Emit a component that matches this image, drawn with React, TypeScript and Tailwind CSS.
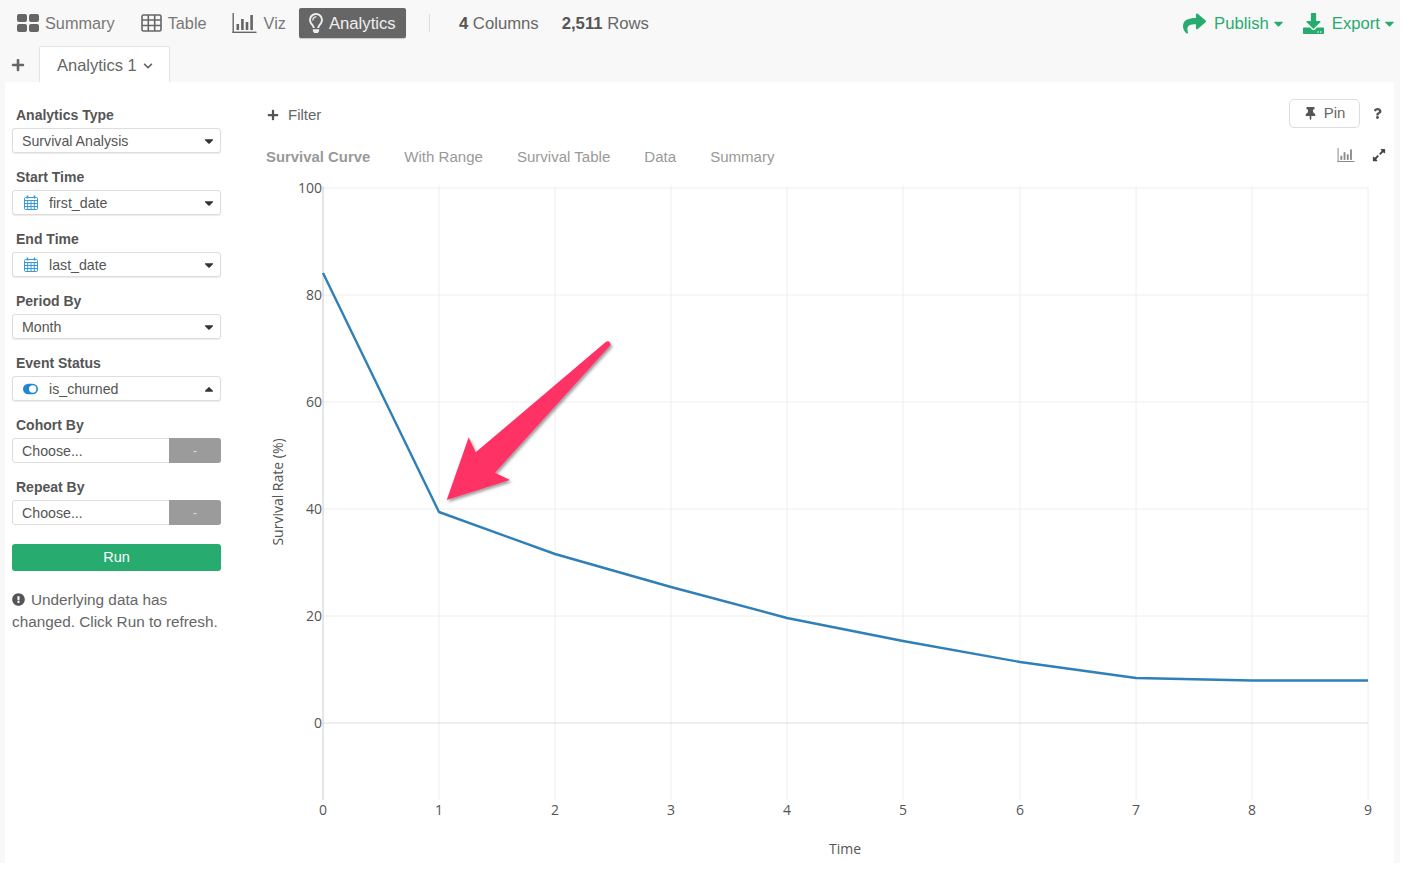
import { ReactNode } from 'react';
import {
  FaCaretDown,
  FaCaretUp,
  FaChevronDown,
  FaDownload,
  FaExclamationCircle,
  FaExpandAlt,
  FaPlus,
  FaQuestion,
  FaRegLightbulb,
  FaShare,
  FaThumbtack,
} from 'react-icons/fa';

const SummaryIcon = () => (
  <svg width="22" height="18" viewBox="0 0 22 18" fill="#666">
    <rect x="0" y="0" width="10" height="8" rx="2" />
    <rect x="12" y="0" width="10" height="8" rx="2" />
    <rect x="0" y="10" width="10" height="8" rx="2" />
    <rect x="12" y="10" width="10" height="8" rx="2" />
  </svg>
);

const TableIcon = () => (
  <svg width="21" height="18" viewBox="0 0 21 18" fill="none" stroke="#666" strokeWidth="1.6">
    <rect x="1" y="1" width="19" height="16" rx="1.5" />
    <path d="M1 6h19M1 11.5h19M7.3 1v16M13.7 1v16" />
  </svg>
);

const BarsIcon = ({ w, h, color }: { w: number; h: number; color: string }) => (
  <svg width={w} height={h} viewBox="0 0 24 20" fill={color}>
    <rect x="0" y="0" width="1.4" height="20" />
    <rect x="0" y="18.6" width="24" height="1.4" />
    <rect x="4" y="11" width="2.6" height="6" />
    <rect x="8.6" y="6" width="2.6" height="11" />
    <rect x="13.2" y="9" width="2.6" height="8" />
    <rect x="17.8" y="2" width="2.6" height="15" />
  </svg>
);

const CalendarIcon = () => (
  <svg width="14" height="15" viewBox="0 0 14 15" fill="none" stroke="#3b9ad9" strokeWidth="1">
    <rect x="0.5" y="2.5" width="13" height="12" rx="1" />
    <path d="M0.5 5.5h13M0.5 8.5h13M0.5 11.5h13M3.7 5.5v9M7 5.5v9M10.3 5.5v9" />
    <path d="M3.5 0.5v3M10.5 0.5v3" strokeWidth="1.6" />
  </svg>
);

const ToggleIcon = () => (
  <svg width="17" height="12" viewBox="0 0 17 12">
    <rect x="0" y="0" width="17" height="12" rx="6" fill="#1f86d1" />
    <circle cx="11" cy="6" r="4.2" fill="#fff" />
  </svg>
);

const Field = ({ label, children }: { label: string; children: ReactNode }) => (
  <div className="flex flex-col">
    <div className="h-[23px] pl-[4px] text-[14px] leading-[20px] font-bold text-[#555]">{label}</div>
    {children}
  </div>
);

const SelectBox = ({ icon, value, up }: { icon?: ReactNode; value: string; up?: boolean }) => (
  <div className="flex h-[25px] items-center rounded-[3px] border border-[#ddd] bg-white pr-[4px] pl-[9px] text-[14.2px] text-[#555] shadow-[0_1px_1px_rgba(0,0,0,0.08)]">
    {icon && <span className="mr-[11px] ml-[1px] flex w-[15px] justify-center">{icon}</span>}
    <span className="flex-1 pt-[2px]">{value}</span>
    {up ? <FaCaretUp size={14} color="#333" /> : <FaCaretDown size={14} color="#333" />}
  </div>
);

const ChooseBox = () => (
  <div className="flex h-[25px] rounded-[3px] border border-[#ddd] bg-white text-[14.2px] text-[#555]">
    <div className="flex flex-1 items-center pt-[2px] pl-[9px]">Choose...</div>
    <div className="-my-[1px] -mr-[1px] flex w-[52px] items-center justify-center rounded-r-[3px] bg-[#9b9b9b] text-[12px] text-[#ddd]">
      -
    </div>
  </div>
);

const xTicks = [323, 439, 555, 671, 787, 903, 1020, 1136, 1252, 1368];
const yTicks = [
  { y: 188, label: '100' },
  { y: 295, label: '80' },
  { y: 402, label: '60' },
  { y: 509, label: '40' },
  { y: 616, label: '20' },
  { y: 723, label: '0' },
];
const curve =
  '323,273 439,512 555,554 671,587 787,618 903,641 1020,662 1136,678 1252,680.5 1368,680.5';

const SurvivalChart = () => (
  <svg
    width="1144"
    height="685"
    viewBox="250 178 1144 685"
    className="block"
    style={{ fontFamily: '"Open Sans", sans-serif' }}
  >
    <defs>
      <filter id="arrowShadow" x="-10%" y="-10%" width="125%" height="125%">
        <feDropShadow dx="1.5" dy="2" stdDeviation="1.5" floodColor="#000" floodOpacity="0.4" />
      </filter>
    </defs>
    {xTicks.slice(1).map((x) => (
      <line key={x} x1={x} x2={x} y1="186" y2="800" stroke="#eee" strokeWidth="1" />
    ))}
    {yTicks.map((t) => (
      <line
        key={t.y}
        x1="323"
        x2="1368"
        y1={t.y}
        y2={t.y}
        stroke={t.label === '0' ? '#ddd' : '#eee'}
        strokeWidth="1"
      />
    ))}
    <line x1="323" x2="323" y1="186" y2="800" stroke="#ccc" strokeWidth="1" />
    <polyline points={curve} fill="none" stroke="#2f7fb8" strokeWidth="2.4" strokeLinejoin="round" />
    {yTicks.map((t) => (
      <text key={t.label} x="322" y={t.y + 5} textAnchor="end" fontSize="14" fill="#555">
        {t.label}
      </text>
    ))}
    {xTicks.map((x, i) => (
      <text key={x} x={x} y="815" textAnchor="middle" fontSize="14" fill="#555">
        {i}
      </text>
    ))}
    <text x="845" y="854" textAnchor="middle" fontSize="14" fill="#555">
      Time
    </text>
    <text
      transform="translate(283 492) rotate(-90)"
      textAnchor="middle"
      fontSize="14"
      fill="#555"
    >
      Survival Rate (%)
    </text>
    <path
      d="M446.7 500 L468.7 437.3 L475.7 452.3 L606 341.7 Q610 340 610.7 345 L495 472.7 L510 480 Z"
      fill="#ff3366"
      filter="url(#arrowShadow)"
    />
  </svg>
);

const App = () => {
  return (
    <div className="h-[896px] w-[1410px] bg-white font-['Liberation_Sans',sans-serif]">
      <div className="flex h-[863px] w-[1400px] flex-col bg-[#f8f8f8]">
        <div className="flex h-[46px] items-center pl-[17px] text-[16.3px] text-[#777]">
          <div className="flex items-center gap-[6px]">
            <SummaryIcon />
            <span>Summary</span>
          </div>
          <div className="ml-[26px] flex items-center gap-[6px]">
            <TableIcon />
            <span>Table</span>
          </div>
          <div className="ml-[25px] flex items-center gap-[7px]">
            <BarsIcon w={25} h={20} color="#666" />
            <span>Viz</span>
          </div>
          <div className="ml-[13px] flex h-[30px] w-[107px] items-center gap-[3px] rounded-[2px] bg-[#666] pl-[7px] text-[16.7px] text-[#eee] shadow-[0_1px_1px_rgba(0,0,0,0.2)]">
            <FaRegLightbulb size={20} color="#eee" />
            <span className="pt-[1px]">Analytics</span>
          </div>
          <div className="ml-[23px] h-[18px] w-px bg-[#ddd]" />
          <div className="mt-[2px] ml-[29px] text-[16.7px] text-[#666]">
            <b className="font-bold text-[#555]">4</b> Columns
          </div>
          <div className="mt-[2px] ml-[23px] text-[16.7px] text-[#666]">
            <b className="font-bold text-[#555]">2,511</b> Rows
          </div>
          <div className="mt-[2px] ml-auto flex items-center pr-[3px] text-[16.7px] text-[#27ab6f]">
            <FaShare size={23} />
            <span className="ml-[8px]">Publish</span>
            <FaCaretDown size={15} className="ml-[2px]" />
            <FaDownload size={21} className="ml-[17px]" />
            <span className="ml-[8px]">Export</span>
            <FaCaretDown size={15} className="ml-[2px]" />
          </div>
        </div>

        <div className="flex h-[36px] items-end">
          <div className="flex h-full w-[39px] items-center justify-center pt-[2px]">
            <FaPlus size={14} color="#666" className="mr-[3px]" />
          </div>
          <div className="flex h-[36px] w-[131px] items-center rounded-t-[2px] border border-b-0 border-[#e4e4e4] bg-white pt-[2px] pl-[17px] text-[16.5px] text-[#666]">
            Analytics 1
            <FaChevronDown size={10} className="ml-[6px]" />
          </div>
        </div>

        <div className="ml-[5px] flex w-[1389px] flex-1 bg-white">
          <div className="flex w-[245px] flex-col gap-[14px] pt-[23px] pr-[29px] pl-[7px]">
            <Field label="Analytics Type">
              <SelectBox value="Survival Analysis" />
            </Field>
            <Field label="Start Time">
              <SelectBox icon={<CalendarIcon />} value="first_date" />
            </Field>
            <Field label="End Time">
              <SelectBox icon={<CalendarIcon />} value="last_date" />
            </Field>
            <Field label="Period By">
              <SelectBox value="Month" />
            </Field>
            <Field label="Event Status">
              <SelectBox icon={<ToggleIcon />} value="is_churned" up />
            </Field>
            <Field label="Cohort By">
              <ChooseBox />
            </Field>
            <Field label="Repeat By">
              <ChooseBox />
            </Field>
            <div className="mt-[5px] flex h-[27px] items-center justify-center rounded-[3px] bg-[#27ab6f] text-[14.5px] text-white">
              Run
            </div>
            <div className="mt-[4px] text-[15.3px] leading-[22px] text-[#666]">
              <FaExclamationCircle size={13} color="#555" className="mr-[6px] inline align-[-1px]" />
              Underlying data has changed. Click Run to refresh.
            </div>
          </div>

          <div className="flex flex-1 flex-col">
            <div className="flex h-[57px] items-start justify-between pt-[17px] pl-[17px]">
              <div className="mt-[5px] flex items-center gap-[9px] text-[15px] text-[#666]">
                <FaPlus size={12} color="#555" />
                <span>Filter</span>
              </div>
              <div className="flex items-center">
                <div className="flex h-[29px] w-[71px] items-center justify-center gap-[7px] rounded-[5px] border border-[#ddd] text-[15px] text-[#666]">
                  <FaThumbtack size={13} color="#555" />
                  <span>Pin</span>
                </div>
                <FaQuestion size={11} color="#555" className="mr-[11px] ml-[12px]" />
              </div>
            </div>
            <div className="flex h-[39px] items-start justify-between pl-[16px] text-[15.05px] text-[#999]">
              <div className="flex gap-[34px] pt-[7px]">
                <span className="text-[14.9px] font-bold">Survival Curve</span>
                <span>With Range</span>
                <span>Survival Table</span>
                <span>Data</span>
                <span>Summary</span>
              </div>
              <div className="flex items-center gap-[17px] pt-[9px] pr-[8px]">
                <BarsIcon w={18} h={14} color="#888" />
                <FaExpandAlt size={14} color="#444" />
              </div>
            </div>
            <SurvivalChart />
          </div>
        </div>
      </div>
    </div>
  );
};

export default App;
